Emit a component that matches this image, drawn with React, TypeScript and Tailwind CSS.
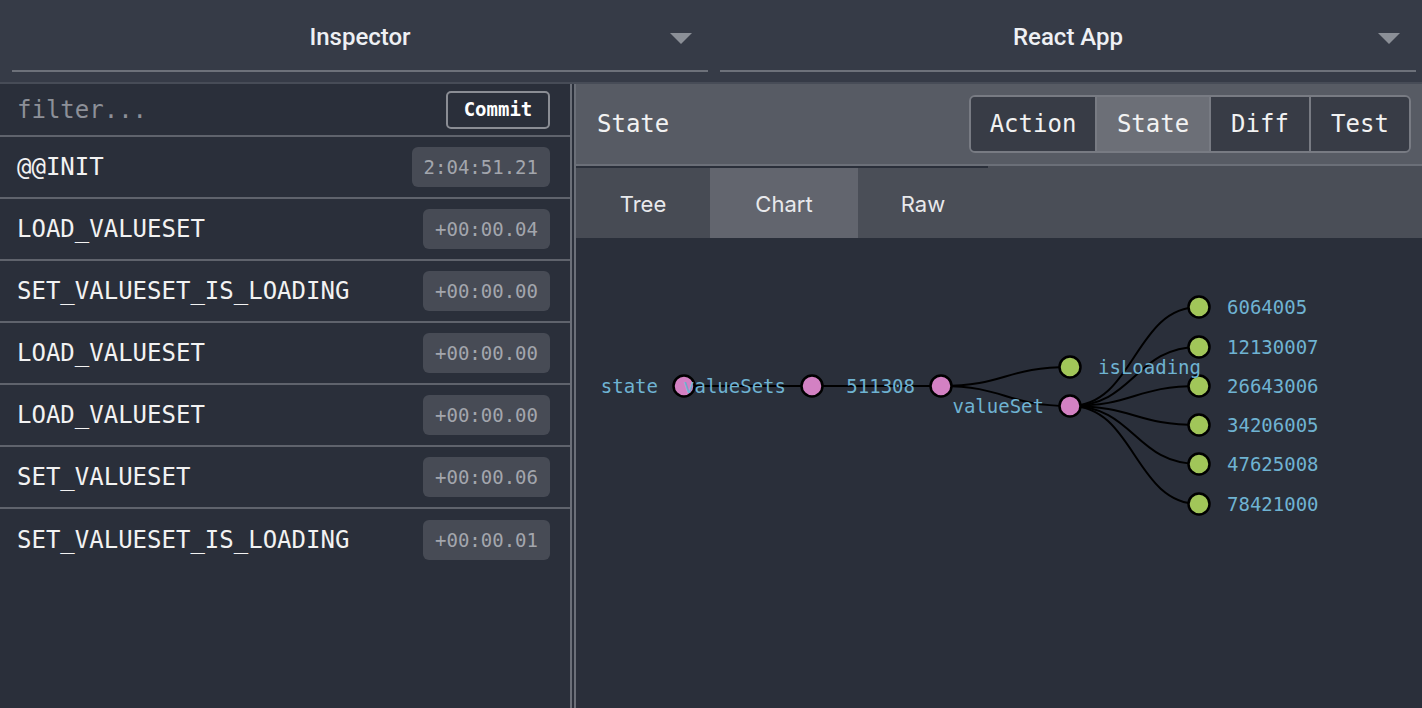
import React from "react"

const mono = { fontFamily: '"DejaVu Sans Mono", "Liberation Mono", monospace' }
const sans = { fontFamily: 'Roboto, "Noto Sans", sans-serif' }
const ui = { fontFamily: 'Inter, "Noto Sans", sans-serif' }

const actions = [
  { name: "@@INIT", time: "2:04:51.21" },
  { name: "LOAD_VALUESET", time: "+00:00.04" },
  { name: "SET_VALUESET_IS_LOADING", time: "+00:00.00" },
  { name: "LOAD_VALUESET", time: "+00:00.00" },
  { name: "LOAD_VALUESET", time: "+00:00.00" },
  { name: "SET_VALUESET", time: "+00:00.06" },
  { name: "SET_VALUESET_IS_LOADING", time: "+00:00.01" },
]

function Select({ label }: { label: string }) {
  return (
    <div className="relative w-[696px] h-[72px] flex items-center justify-center border-b-2 border-[#6d717a]">
      <span className="text-[24px] font-medium text-[#eef0f4] mt-[4px]" style={sans}>
        {label}
      </span>
      <svg className="absolute right-[16px] top-[33px]" width="22" height="11" viewBox="0 0 22 11">
        <polygon points="0,0 22,0 11,11" fill="#8b8f97" />
      </svg>
    </div>
  )
}

const links = [
  "M684,386 L812,386",
  "M812,386 L941,386",
  "M941,386 C1005.5,386 1005.5,367 1070,367",
  "M941,386 C1005.5,386 1005.5,406 1070,406",
]
const leaves = [
  { y: 307, label: "6064005" },
  { y: 347, label: "12130007" },
  { y: 386, label: "26643006" },
  { y: 425, label: "34206005" },
  { y: 464, label: "47625008" },
  { y: 504, label: "78421000" },
]

function Chart() {
  const pink = "#d381c3"
  const green = "#a1c659"
  const blue = "#6fb3d2"
  const inner = [
    { x: 684, y: 386, label: "state" },
    { x: 812, y: 386, label: "valueSets" },
    { x: 941, y: 386, label: "511308" },
    { x: 1070, y: 406, label: "valueSet" },
  ]
  return (
    <svg width="846" height="470" viewBox="576 238 846 470" style={mono}>
      <g fill="none" stroke="#000" strokeWidth="2">
        {links.map((d, i) => (
          <path key={i} d={d} />
        ))}
        {leaves.map((l, i) => (
          <path key={i} d={`M1070,406 C1134.5,406 1134.5,${l.y} 1199,${l.y}`} />
        ))}
      </g>
      <g stroke="#000" strokeWidth="2.5">
        {inner.map((n) => (
          <circle key={n.label} cx={n.x} cy={n.y} r="10.5" fill={pink} />
        ))}
        <circle cx={1070} cy={367} r="10.5" fill={green} />
        {leaves.map((l) => (
          <circle key={l.label} cx={1199} cy={l.y} r="10.5" fill={green} />
        ))}
      </g>
      <g fill={blue} fontSize="19">
        {inner.map((n) => (
          <text key={n.label} x={n.x - 26} y={n.y} dy="0.35em" textAnchor="end">
            {n.label}
          </text>
        ))}
        <text x={1098} y={367} dy="0.35em">
          isLoading
        </text>
        {leaves.map((l) => (
          <text key={l.label} x={1227} y={l.y} dy="0.35em">
            {l.label}
          </text>
        ))}
      </g>
    </svg>
  )
}

export default function App() {
  return (
    <div className="w-[1422px] h-[708px] flex flex-col bg-[#2a2f3a] overflow-hidden">
      <header className="h-[84px] shrink-0 flex gap-3 pl-3 bg-[#363b47] border-b-2 border-[#474c57]">
        <Select label="Inspector" />
        <Select label="React App" />
      </header>

      <div className="flex flex-1 min-h-0">
        {/* action list */}
        <div className="w-[572px] shrink-0 flex flex-col border-r-2 border-[#6b6f78]" style={mono}>
          <div className="h-[53px] shrink-0 flex items-center justify-between pl-[17px] pr-[20px] border-b-2 border-[#5f636c]">
            <span className="text-[24px] text-[#8d9098]">filter...</span>
            <button className="h-[38px] w-[104px] rounded-[5px] border-2 border-[#8a8d94] text-[19px] font-semibold text-white">
              Commit
            </button>
          </div>
          {actions.map((a, i) => (
            <div
              key={i}
              className={`h-[62px] shrink-0 flex items-center justify-between pl-[17px] pr-[20px] ${
                i < actions.length - 1 ? "border-b-2 border-[#5f636c]" : ""
              }`}
            >
              <span className="text-[24px] text-[#f2f2f2]">{a.name}</span>
              <span className="h-[40px] px-[12px] flex items-center rounded-[6px] bg-[#474b55] text-[19px] text-[#a3a6ad]">
                {a.time}
              </span>
            </div>
          ))}
        </div>
        <div className="w-[2px] shrink-0" />
        <div className="w-[2px] shrink-0 bg-[#6b6f78]" />

        {/* state panel */}
        <div className="flex-1 flex flex-col min-w-0">
          <div className="h-[82px] shrink-0 flex items-center justify-between pl-[21px] pr-[11px] bg-[#575b64] border-b-2 border-[#6b6f78]">
            <span className="text-[24px] text-[#f2f2f2]" style={mono}>
              State
            </span>
            <div className="flex h-[58px] rounded-[6px] border-2 border-[#787b83] overflow-hidden text-[24px] text-[#f2f2f2]" style={mono}>
              <div className="w-[124px] flex items-center justify-center bg-[#383c46]">Action</div>
              <div className="w-[114px] flex items-center justify-center bg-[#6c6f77] border-l-2 border-[#787b83]">State</div>
              <div className="w-[100px] flex items-center justify-center bg-[#383c46] border-l-2 border-[#787b83]">Diff</div>
              <div className="w-[100px] flex items-center justify-center bg-[#383c46] border-l-2 border-[#787b83]">Test</div>
            </div>
          </div>
          <div className="h-[72px] shrink-0 flex bg-[#4a4e57]">
            <div className="flex border-t-2 border-[#2a2f3a] text-[22px] text-[#e8e9ec]" style={ui}>
              <div className="w-[134px] flex items-center justify-center pt-[2px] bg-[#474b54]">Tree</div>
              <div className="w-[148px] flex items-center justify-center pt-[2px] bg-[#62656e]">Chart</div>
              <div className="w-[130px] flex items-center justify-center pt-[2px]">Raw</div>
            </div>
          </div>
          <div className="flex-1 bg-[#2a2f3a]">
            <Chart />
          </div>
        </div>
      </div>
    </div>
  )
}
